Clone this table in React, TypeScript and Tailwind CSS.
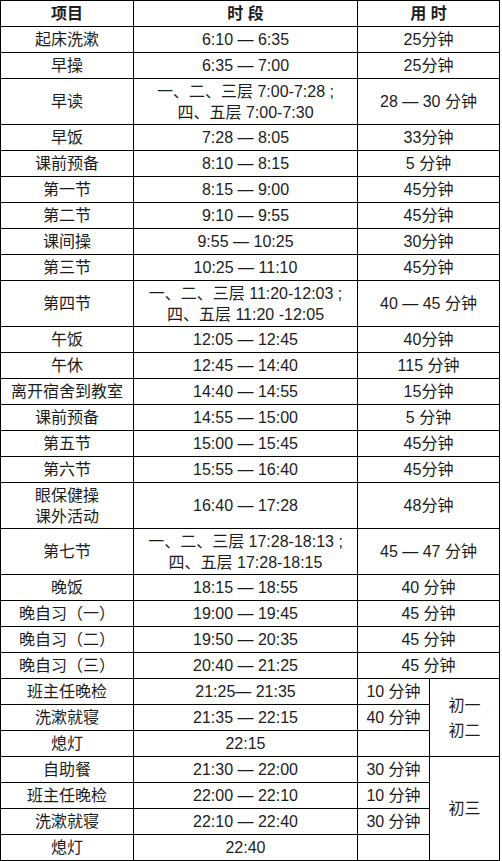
type Cell = string | string[]

const upper: [Cell, Cell, Cell][] = [
  ['起床洗漱', '6:10 — 6:35', '25分钟'],
  ['早操', '6:35 — 7:00', '25分钟'],
  ['早读', ['一、二、三层 7:00-7:28 ;', '四、五层 7:00-7:30'], '28 — 30 分钟'],
  ['早饭', '7:28 — 8:05', '33分钟'],
  ['课前预备', '8:10 — 8:15', '5 分钟'],
  ['第一节', '8:15 — 9:00', '45分钟'],
  ['第二节', '9:10 — 9:55', '45分钟'],
  ['课间操', '9:55 — 10:25', '30分钟'],
  ['第三节', '10:25 — 11:10', '45分钟'],
  ['第四节', ['一、二、三层 11:20-12:03 ;', '四、五层 11:20 -12:05'], '40 — 45 分钟'],
  ['午饭', '12:05 — 12:45', '40分钟'],
  ['午休', '12:45 — 14:40', '115 分钟'],
  ['离开宿舍到教室', '14:40 — 14:55', '15分钟'],
  ['课前预备', '14:55 — 15:00', '5 分钟'],
  ['第五节', '15:00 — 15:45', '45分钟'],
  ['第六节', '15:55 — 16:40', '45分钟'],
  [['眼保健操', '课外活动'], '16:40 — 17:28', '48分钟'],
  ['第七节', ['一、二、三层 17:28-18:13 ;', '四、五层 17:28-18:15'], '45 — 47 分钟'],
  ['晚饭', '18:15 — 18:55', '40 分钟'],
  ['晚自习（一）', '19:00 — 19:45', '45 分钟'],
  ['晚自习（二）', '19:50 — 20:35', '45 分钟'],
  ['晚自习（三）', '20:40 — 21:25', '45 分钟'],
]

const groups = [
  {
    grade: ['初一', '初二'],
    rows: [
      ['班主任晚检', '21:25— 21:35', '10 分钟'],
      ['洗漱就寝', '21:35 — 22:15', '40 分钟'],
      ['熄灯', '22:15', ''],
    ],
  },
  {
    grade: ['初三'],
    rows: [
      ['自助餐', '21:30 — 22:00', '30 分钟'],
      ['班主任晚检', '22:00 — 22:10', '10 分钟'],
      ['洗漱就寝', '22:10 — 22:40', '30 分钟'],
      ['熄灯', '22:40', ''],
    ],
  },
]

const td = 'border border-black p-0 text-center align-middle'

function Lines({ value }: { value: Cell }) {
  if (typeof value === 'string') return <>{value}</>
  return (
    <div className="leading-[21px]">
      {value.map((line) => (
        <div key={line}>{line}</div>
      ))}
    </div>
  )
}

export default function App() {
  return (
    <div className="min-h-screen bg-white font-['Liberation_Sans','Noto_Sans_CJK_SC',sans-serif] text-[16px] leading-none text-[#1c1c1c]">
      <table className="w-[499px] table-fixed border-collapse">
        <colgroup>
          <col className="w-[133px]" />
          <col className="w-[224px]" />
          <col className="w-[72px]" />
          <col className="w-[70px]" />
        </colgroup>
        <thead>
          <tr className="h-[26px] font-bold">
            <td className={td}>项目</td>
            <td className={td}>时 段</td>
            <td className={td} colSpan={2}>
              用 时
            </td>
          </tr>
        </thead>
        <tbody>
          {upper.map(([name, time, span], i) => {
            const tall = Array.isArray(name) || Array.isArray(time)
            return (
              <tr key={i} className={tall ? 'h-[46px]' : 'h-[26px]'}>
                <td className={td}>
                  <Lines value={name} />
                </td>
                <td className={td}>
                  <Lines value={time} />
                </td>
                <td className={td} colSpan={2}>
                  {span}
                </td>
              </tr>
            )
          })}
          {groups.map((g) =>
            g.rows.map(([name, time, span], i) => (
              <tr key={g.grade[0] + i} className="h-[26px]">
                <td className={td}>{name}</td>
                <td className={td}>{time}</td>
                <td className={td}>{span}</td>
                {i === 0 && (
                  <td className={td} rowSpan={g.rows.length}>
                    <div className="leading-[25px]">
                      {g.grade.map((t) => (
                        <div key={t}>{t}</div>
                      ))}
                    </div>
                  </td>
                )}
              </tr>
            ))
          )}
        </tbody>
      </table>
    </div>
  )
}
